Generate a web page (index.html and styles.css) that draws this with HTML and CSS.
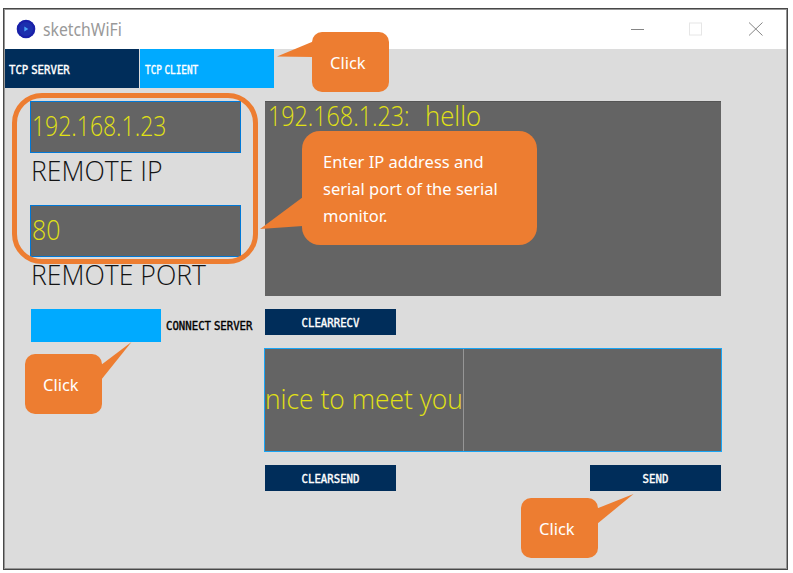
FILE: index.html
```html
<!DOCTYPE html>
<html lang="en">
<head>
<meta charset="utf-8">
<title>sketchWiFi</title>
<link rel="stylesheet" href="styles.css">
</head>
<body>
<div class="window">
  <header class="titlebar">
    <svg class="logo" width="20" height="20" viewBox="0 0 20 20"><circle cx="10" cy="10" r="9.3" fill="#1c2fae"/><circle cx="10" cy="10" r="8" fill="none" stroke="#1a1ea8" stroke-width="2"/><path d="M8.3 7.5v5l4-2.5z" fill="#4ba3f5"/></svg>
    <span class="title">sketchWiFi</span>
    <svg class="controls" width="134" height="16" viewBox="0 0 134 16" fill="none"><path d="M1 8.5h13" stroke="#858585"/><rect x="59.500" y="2" width="12" height="12" stroke="#e6e6e6"/><path d="M119 1.500l13.500 13M132.500 1.500l-13.500 13" stroke="#858585"/></svg>
  </header>
  <nav class="tabs">
    <div class="tab"><span class="pixel w-server">TCP SERVER</span></div>
    <div class="tab active"><span class="pixel w-client">TCP CLIENT</span></div>
  </nav>
  <main class="content">
    <section class="left">
      <div class="field"><span class="big digits">192.168.1.23</span></div>
      <div class="label"><span class="big">REMOTE IP</span></div>
      <div class="field"><span class="big w-80">80</span></div>
      <div class="label"><span class="big">REMOTE PORT</span></div>
      <div class="connect"><div class="toggle"></div><span class="pixel">CONNECT SERVER</span></div>
    </section>
    <section class="right">
      <div class="received"><span class="big sender">192.168.1.23:</span><span class="big hello">hello</span></div>
      <div class="button"><span class="pixel">CLEARRECV</span></div>
      <div class="message"><span class="big typed">nice to meet you</span></div>
      <div class="actions">
        <div class="button"><span class="pixel">CLEARSEND</span></div>
        <div class="button"><span class="pixel">SEND</span></div>
      </div>
    </section>
  </main>
</div>
<div class="outline"></div>
<svg class="tails" width="793" height="573" viewBox="0 0 793 573" fill="#ed7d31"><path d="M277 56.500L313 41.500V57z"/><path d="M260 229L303 197V226z"/><path d="M131.500 342L101 365V380z"/><path d="M633.500 494L597 508.500V524z"/></svg>
<div class="callout c-tab"><span class="note">Click</span></div>
<div class="callout c-field"><span class="note">Enter IP address and<br>serial port of the serial<br>monitor.</span></div>
<div class="callout c-connect"><span class="note">Click</span></div>
<div class="callout c-send"><span class="note">Click</span></div>
</body>
</html>
```
FILE: styles.css
```css
* { box-sizing: border-box; }
body { margin: 0; width: 793px; height: 573px; overflow: hidden; position: relative; background: #fff; font-family: "Open Sans", sans-serif; }
.window { width: 785px; height: 562px; margin: 8px 0 0 3px; border: 1px solid #484848; box-shadow: inset 0 0 0 1px #969696; background: #dcdcdc; padding: 1px; }
.titlebar { height: 39px; background: #fff; display: flex; align-items: center; padding: 0 22px 1px 11px; }
.title { margin-left: 7px; font: 17.5px "Noto Sans", sans-serif; color: #999; transform: scaleX(.9); transform-origin: left; }
.controls { margin-left: auto; }
.tabs { display: flex; gap: 1px; height: 39px; background: #dcdcdc; }
.tab { width: 134px; background: #002d5a; color: #fff; display: flex; align-items: center; padding: 2px 0 0 4px; }
.tab.active { background: #0af; padding-left: 5px; }
.pixel { display: inline-block; white-space: nowrap; font: 12px/14px "DejaVu Sans Mono", monospace; -webkit-text-stroke: .4px currentColor; word-spacing: -4px; transform-origin: left; transform: scaleX(.89); }
.w-client { transform: scaleX(.78); }
.big { display: inline-block; white-space: nowrap; font-size: 28px; line-height: 38px; font-weight: 300; transform-origin: left; transform: translateY(-2px) scaleX(.95); }
.digits { transform: translateY(-2px) scaleX(.82); }
.w-80 { transform: translateY(-2px) scaleX(.89); }
.content { display: flex; padding-top: 13px; }
.left { width: 259px; padding-left: 25px; }
.field { width: 211px; height: 52px; background: #646464; border: 1px solid #0078d7; color: #e1e114; display: flex; align-items: center; padding-left: 1px; }
.label { height: 52px; padding: 0 0 0 1px; color: #141414; }
.connect { height: 33px; margin-left: 1px; display: flex; gap: 5px; align-items: center; }
.toggle { width: 130px; height: 33px; background: #0af; flex: none; }
.right { width: 458px; }
.received { width: 456px; height: 195px; margin-left: 1px; padding-left: 3px; background: #646464; border-top: 1px solid #555; color: #e1e114; display: flex; align-items: flex-start; }
.received .big { margin-top: -4px; }
.sender { width: 157px; transform: translateY(-2px) scaleX(.83); }
.hello { transform: translateY(-2px) scaleX(.92); }
.button { width: 131px; height: 26px; background: #002d5a; color: #fff; display: flex; align-items: center; justify-content: center; padding-top: 2px; }
.button .pixel { transform-origin: center; }
.received + .button { margin: 13px 0 13px 1px; }
.message { height: 104px; border: 1px solid #19a5f5; background: #646464; color: #e1e114; display: flex; align-items: center; }
.typed { width: 198px; transform: translateY(-2px) scaleX(.943); }
.message::after { content: ""; width: 1px; height: 102px; background: #969696; }
.actions { display: flex; justify-content: space-between; margin: 13px 1px 0; }
.outline { position: absolute; left: 12px; top: 93px; width: 246px; height: 171px; border: 5px solid #ed7d31; border-radius: 30px; }
.tails { position: absolute; left: 0; top: 0; }
.callout { position: absolute; width: 77px; height: 60px; border-radius: 10px; background: #ed7d31; color: #fff; padding: 17px 18px; }
.note { display: block; white-space: nowrap; font: 17px/27px "Noto Sans", sans-serif; transform-origin: left; transform: scaleX(.97); }
.c-tab { left: 312px; top: 32px; }
.c-field { left: 302px; top: 131px; width: 235px; height: 114px; border-radius: 18px; padding: 17px 21px; }
.c-connect { left: 25px; top: 354px; }
.c-send { left: 521px; top: 498px; }
```
